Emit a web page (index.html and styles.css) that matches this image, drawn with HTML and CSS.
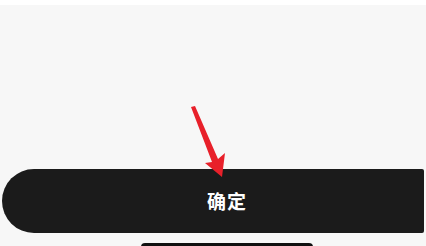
FILE: index.html
```html
<!DOCTYPE html>
<html lang="zh">
<head>
<meta charset="utf-8">
<link rel="stylesheet" href="styles.css">
</head>
<body>
<div class="screen">
  <div class="top-strip"></div>
  <div class="content"></div>
  <button class="confirm">确定</button>
  <div class="bottom">
    <div class="next-bar"></div>
  </div>
  <svg class="arrow" width="426" height="246" viewBox="0 0 426 246">
    <polygon points="191,107 195,106 218,159 225,153 222,177 205,163 212,162" fill="#e8202a"/>
  </svg>
</div>
</body>
</html>
```
FILE: styles.css
```css
html, body {
  margin: 0;
  padding: 0;
}
body {
  width: 426px;
  height: 246px;
  overflow: hidden;
  background: #f7f7f7;
  font-family: "Noto Sans CJK SC", "Noto Sans", sans-serif;
}
.screen {
  position: relative;
  width: 426px;
  height: 246px;
  overflow: hidden;
  display: flex;
  flex-direction: column;
}
.top-strip {
  flex-shrink: 0;
  height: 5px;
  background: #ffffff;
}
.content {
  flex-shrink: 0;
  height: 164px;
}
.confirm {
  flex-shrink: 0;
  display: flex;
  align-items: center;
  justify-content: center;
  margin: 0 0 0 2px;
  width: 422px;
  height: 64px;
  padding: 0 0 2px 28px;
  box-sizing: border-box;
  border: none;
  border-radius: 32px 2px 2px 32px;
  background: #1b1b1b;
  color: #ffffff;
  font-family: "Noto Sans CJK SC", sans-serif;
  font-size: 19px;
  font-weight: 700;
  letter-spacing: 1px;
}
.bottom {
  flex-shrink: 0;
  padding: 10px 0 0 141px;
}
.next-bar {
  width: 172px;
  height: 8px;
  background: #111;
  border-radius: 4px 4px 0 0;
}
.arrow {
  position: absolute;
  left: 0;
  top: 0;
  pointer-events: none;
}
```
